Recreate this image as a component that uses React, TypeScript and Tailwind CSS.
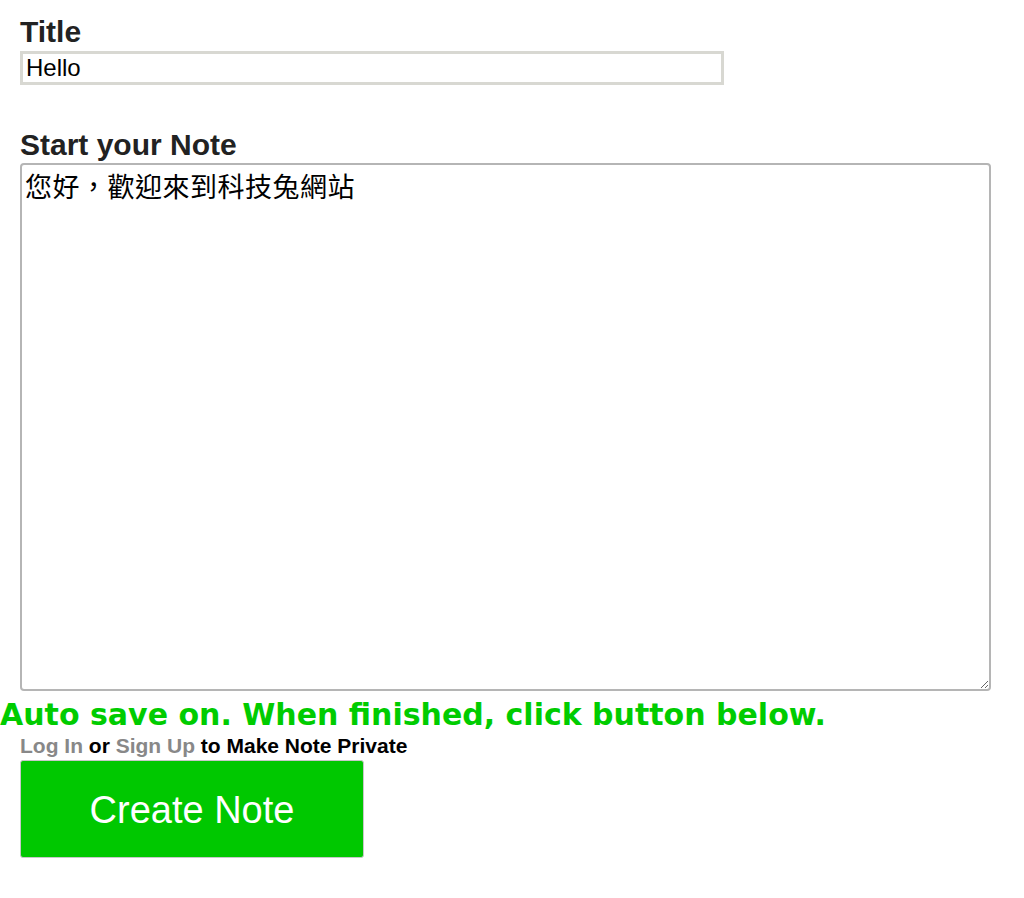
export default function App() {
  return (
    <div className="min-h-[898px] w-[1024px] bg-white font-['Liberation_Sans',Arial,sans-serif] text-[#222]">
      <div className="pt-[14px]">
        <label className="block pl-[20px] text-[30px] font-bold leading-[36px]">Title</label>
        <div className="mt-[1px] pl-[20px]">
          <input
            readOnly
            value="Hello"
            className="h-[34px] w-[704px] border-[3px] border-[#d8d8d2] px-[3px] text-[24px] text-black outline-none"
          />
        </div>

        <label className="mt-[42px] block pl-[20px] text-[30px] font-bold leading-[36px]">Start your Note</label>
        <div className="pl-[20px]">
          <textarea
            readOnly
            value="您好，歡迎來到科技兔網站"
            className="block h-[528px] w-[971px] resize rounded-[4px] border-2 border-[#b5b5b5] px-[3px] py-[6px] font-['Liberation_Sans','Noto_Sans_CJK_TC',sans-serif] text-[27px] leading-[34px] tracking-[0.5px] text-black outline-none"
          />
        </div>

        <p className="mt-[7px] font-['DejaVu_Sans',Verdana,sans-serif] text-[30px] font-bold leading-[34px] text-[#00cc00]">
          Auto save on. When finished, click button below.
        </p>
        <p className="mt-[2px] pl-[20px] text-[21px] font-bold leading-[24px] text-black">
          <span className="text-[#888]">Log In</span> or <span className="text-[#888]">Sign Up</span> to Make Note Private
        </p>
        <div className="mt-[2px] pl-[20px]">
          <button className="h-[98px] w-[344px] rounded-[3px] border border-[#c8c8c8] bg-[#00c800] pt-[3px] text-[38px] text-white">
            Create Note
          </button>
        </div>
      </div>
    </div>
  );
}
